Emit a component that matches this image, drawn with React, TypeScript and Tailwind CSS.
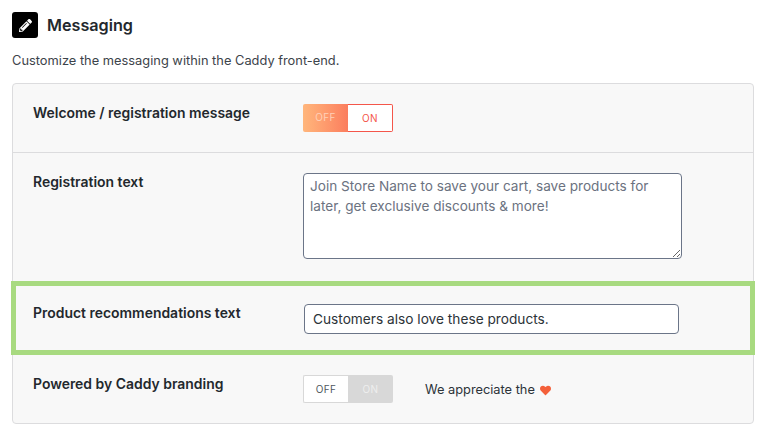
import React from "react";
import { FaPencilAlt, FaHeart } from "react-icons/fa";

function Label({ children, className = "" }: { children: React.ReactNode; className?: string }) {
  return <div className={`w-[270px] shrink-0 text-[13.95px] leading-[20px] font-semibold text-[#23282d] ${className}`}>{children}</div>;
}

export default function App() {
  return (
    <div className="h-[437px] w-[768px] overflow-hidden bg-white pl-3 pt-3 font-['Inter',sans-serif] text-[#23282d]">
      <div className="flex items-center gap-[9px]">
        <div className="flex h-[26px] w-[26px] items-center justify-center rounded-[3px] bg-black">
          <FaPencilAlt className="h-[13px] w-[13px] text-white" />
        </div>
        <h2 className="text-[16.2px] leading-[26px] font-semibold">Messaging</h2>
      </div>
      <p className="mt-[13px] text-[12.85px] leading-[20px] text-[#3c434a]">Customize the messaging within the Caddy front-end.</p>
      <div className="mt-[12px] w-[742px] rounded-[4px] border border-[#dcdcde] bg-[#f8f8f8]">
        <div className="flex h-[69px] border-b border-[#dcdcde] pl-5 pt-[19px]">
          <Label>Welcome / registration message</Label>
          <div className="mt-px flex h-[28px] w-[90px] text-[10px] leading-[26px] tracking-[0.3px]">
            <div className="w-[45px] rounded-l-[2px] bg-gradient-to-r from-[#ffb67c] to-[#fb7d5e] text-center text-[#ffd0b8]">OFF</div>
            <div className="w-[45px] rounded-r-[2px] border border-l-0 border-[#f4564a] bg-white text-center text-[#f4564a]">ON</div>
          </div>
        </div>
        <div className="flex h-[128px] pl-5 pt-5">
          <Label className="-mt-px">Registration text</Label>
          <textarea
            readOnly
            className="h-[86px] w-[379px] rounded-[4px] border border-[#6b7588] bg-white px-[6px] py-[2px] text-[13.6px] leading-[20px] text-[#6b7280] outline-none"
            value="Join Store Name to save your cart, save products for later, get exclusive discounts & more!"
          />
        </div>
        <div className="-mx-[2px] flex h-[74px] border-[5px] border-[#a8da80] pl-[17px] pt-[18px]">
          <Label className="-mt-px">Product recommendations text</Label>
          <input
            readOnly
            className="ml-px h-[30px] w-[375px] rounded-[4px] border border-[#6b7588] bg-white px-2 text-[13.7px] text-[#2c3338] outline-none"
            value="Customers also love these products."
          />
        </div>
        <div className="flex h-[68px] pl-5 pt-[19px]">
          <Label>Powered by Caddy branding</Label>
          <div className="mt-px flex h-[28px] w-[90px] text-[10px] leading-[26px] tracking-[0.3px]">
            <div className="w-[45px] rounded-l-[2px] border border-r-0 border-[#d8d8d8] bg-white text-center text-[#50575e]">OFF</div>
            <div className="w-[45px] rounded-r-[2px] bg-[#d8d8d8] text-center leading-[28px] text-[#eeeeee]">ON</div>
          </div>
          <div className="ml-[32px] mt-[2px] flex h-[28px] items-center gap-[5px] text-[12.8px] text-[#2c3338]">
            We appreciate the
            <FaHeart className="h-[11px] w-[11px] text-[#f4603a]" />
          </div>
        </div>
      </div>
    </div>
  );
}
